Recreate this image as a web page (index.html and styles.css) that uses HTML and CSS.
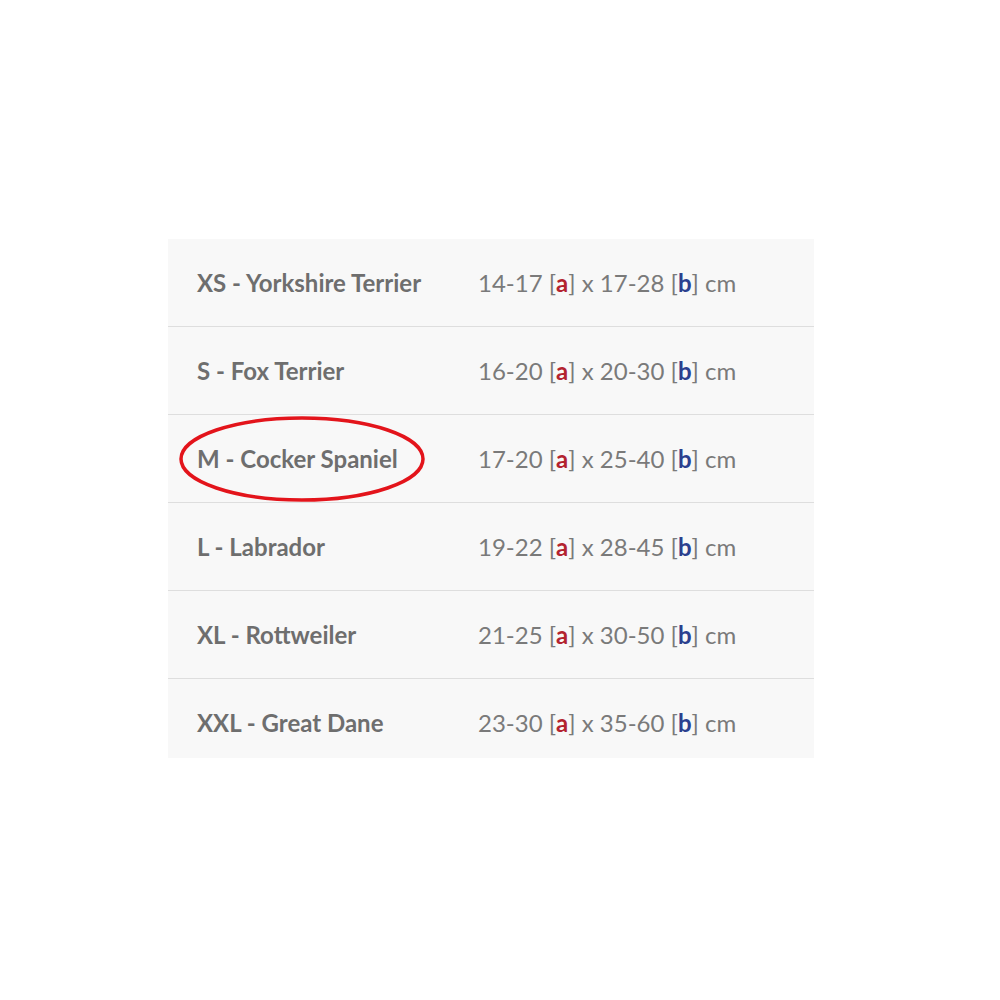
FILE: index.html
```html
<!DOCTYPE html>
<html>
<head>
<meta charset="utf-8">
<link rel="stylesheet" href="styles.css">
</head>
<body>
<div class="page">
  <div class="table">
    <div class="row"><div class="size">XS - Yorkshire Terrier</div><div class="dims">14-17 [<b class="a">a</b>] x 17-28 [<b class="b">b</b>] cm</div></div>
    <div class="row"><div class="size">S - Fox Terrier</div><div class="dims">16-20 [<b class="a">a</b>] x 20-30 [<b class="b">b</b>] cm</div></div>
    <div class="row"><div class="size marked">M - Cocker Spaniel
      <svg class="ring" width="250" height="88" viewBox="0 0 250 88"><ellipse cx="124" cy="43" rx="121" ry="41" fill="none" stroke="#e3141b" stroke-width="3.5"/></svg></div><div class="dims">17-20 [<b class="a">a</b>] x 25-40 [<b class="b">b</b>] cm</div></div>
    <div class="row"><div class="size">L - Labrador</div><div class="dims">19-22 [<b class="a">a</b>] x 28-45 [<b class="b">b</b>] cm</div></div>
    <div class="row"><div class="size">XL - Rottweiler</div><div class="dims">21-25 [<b class="a">a</b>] x 30-50 [<b class="b">b</b>] cm</div></div>
    <div class="row last"><div class="size">XXL - Great Dane</div><div class="dims">23-30 [<b class="a">a</b>] x 35-60 [<b class="b">b</b>] cm</div></div>
  </div>
</div>
</body>
</html>
```
FILE: styles.css
```css
html, body {
  margin: 0;
  padding: 0;
  background: #ffffff;
}
body {
  font-family: Lato, "Open Sans", sans-serif;
}
.page {
  padding: 239px 0 0 168px;
}
.table {
  width: 646px;
  height: 519px;
  overflow: hidden;
  background: #f8f8f8;
}
.row {
  display: flex;
  align-items: center;
  height: 87px;
  border-bottom: 1px solid #dedede;
  padding-left: 29px;
}
.row.last {
  border-bottom: none;
}
.size {
  width: 281px;
  font-size: 24px;
  line-height: 30px;
  font-weight: 700;
  color: #6e6e6e;
  position: relative;
}
.dims {
  font-size: 24px;
  line-height: 30px;
  color: #7a7a7a;
}
.dims b {
  font-weight: 700;
}
.a { color: #b3232f; }
.b { color: #2b3f8e; }
.ring {
  position: absolute;
  left: -19px;
  top: 50%;
  margin-top: -43px;
}
```
